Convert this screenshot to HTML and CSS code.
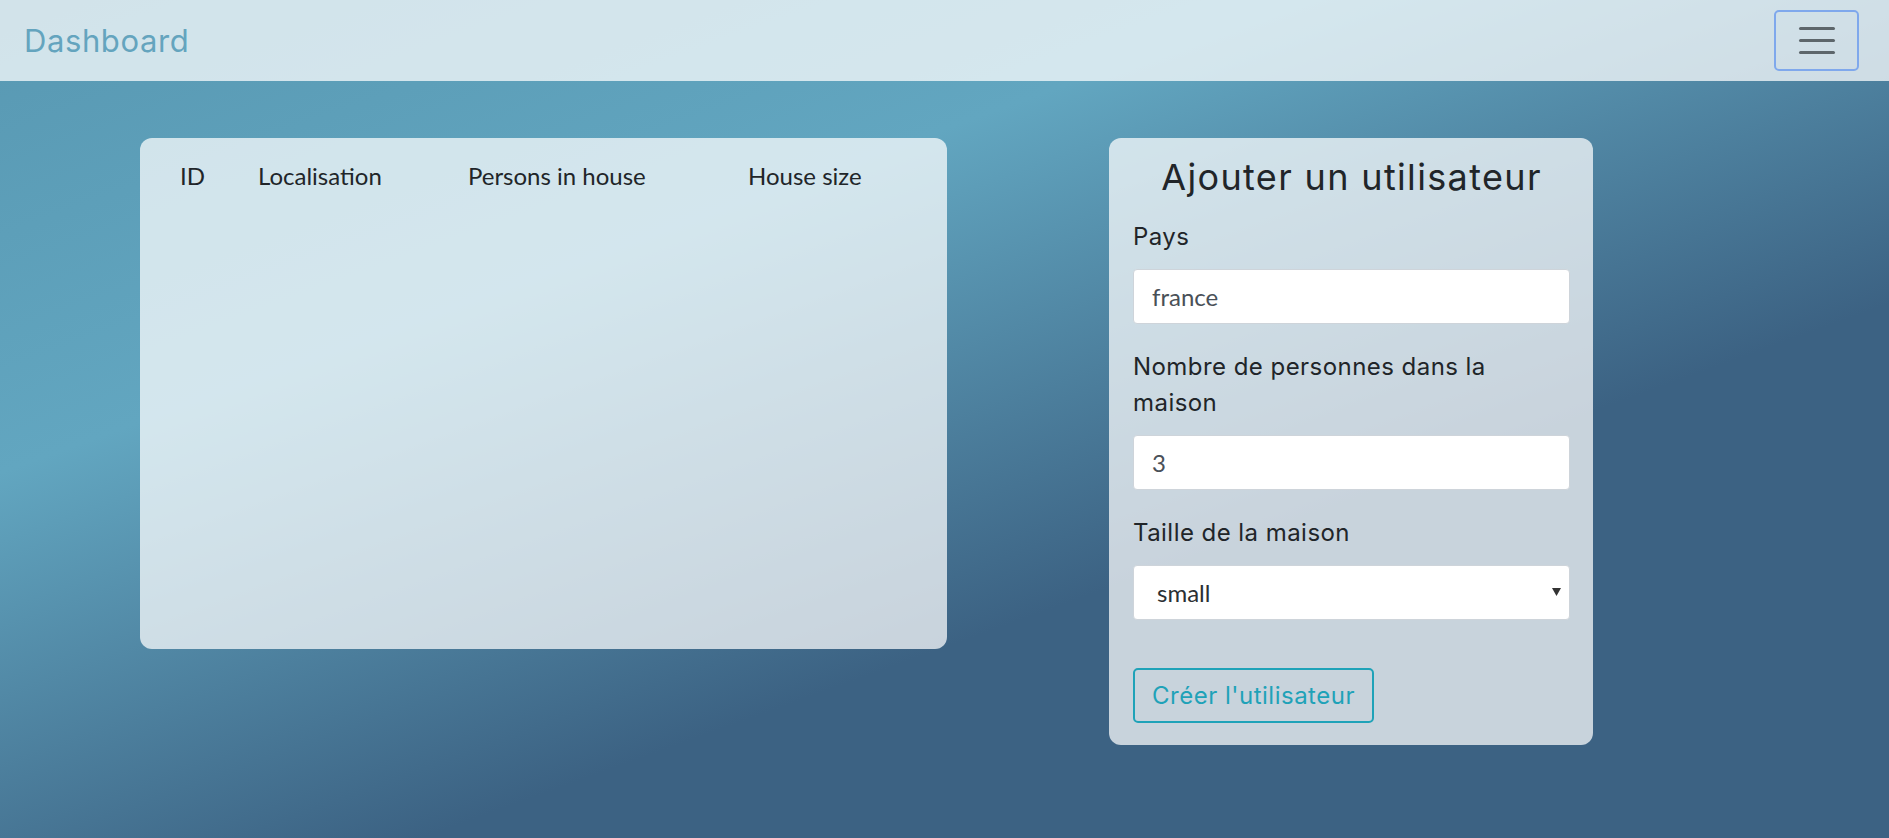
FILE: index.html
```html
<!DOCTYPE html>
<html lang="fr">
<head>
<meta charset="utf-8">
<title>Dashboard</title>
<link rel="stylesheet" href="styles.css">
</head>
<body>
<div class="page">
  <nav class="navbar">
    <a class="brand" href="#">Dashboard</a>
    <button class="toggler" type="button" aria-label="Menu">
      <span class="bar"></span>
      <span class="bar"></span>
      <span class="bar"></span>
    </button>
  </nav>
  <main class="content">
    <section class="card table-card">
      <table class="users-table">
        <colgroup>
          <col class="c-id"><col class="c-loc"><col class="c-persons"><col class="c-size">
        </colgroup>
        <thead>
          <tr><th>ID</th><th>Localisation</th><th>Persons in house</th><th>House size</th></tr>
        </thead>
        <tbody></tbody>
      </table>
    </section>
    <section class="card form-card">
      <h4 class="form-title">Ajouter un utilisateur</h4>
      <form class="user-form">
        <div class="form-group">
          <label class="form-label" for="pays">Pays</label>
          <input class="form-control" id="pays" type="text" value="france">
        </div>
        <div class="form-group">
          <label class="form-label" for="nb">Nombre de personnes dans la maison</label>
          <input class="form-control" id="nb" type="text" value="3">
        </div>
        <div class="form-group">
          <label class="form-label" for="taille">Taille de la maison</label>
          <div class="select-wrap">
            <select class="form-control form-select" id="taille">
              <option>small</option>
              <option>medium</option>
              <option>big</option>
            </select>
            <svg class="select-arrow" width="9" height="8" viewBox="0 0 9 8"><path d="M0 0 H9 L4.5 8 Z" fill="#333"/></svg>
          </div>
        </div>
        <button class="btn-create" type="button">Créer l'utilisateur</button>
      </form>
    </section>
  </main>
</div>
</body>
</html>
```
FILE: styles.css
```css
html, body {
  margin: 0;
  padding: 0;
}

.page {
  min-height: 100vh;
  background: linear-gradient(160deg, #5898b2 0%, #62a6c0 31%, #3c6283 65%, #3c6283 100%);
  font-family: "Inter", "Noto Sans", sans-serif;
  color: #212529;
}

.navbar {
  height: 81px;
  box-sizing: border-box;
  display: flex;
  align-items: center;
  justify-content: space-between;
  padding: 0 30px 0 24px;
  background: rgba(255, 255, 255, 0.73);
}

.brand {
  font-family: "Inter", sans-serif;
  font-size: 31px;
  letter-spacing: 0.6px;
  color: #64a4be;
  text-decoration: none;
}

.toggler {
  width: 85px;
  height: 61px;
  box-sizing: border-box;
  border: 2px solid #7fa8ec;
  border-radius: 5px;
  background: transparent;
  display: flex;
  flex-direction: column;
  align-items: center;
  justify-content: center;
  gap: 9px;
  padding: 0;
}

.bar {
  display: block;
  width: 36px;
  height: 3px;
  border-radius: 2px;
  background: #5d666b;
}

.content {
  display: flex;
  align-items: flex-start;
  gap: 162px;
  padding: 57px 0 0 140px;
}

.card {
  background: rgba(255, 255, 255, 0.72);
  border-radius: 12px;
  box-sizing: border-box;
}

.table-card {
  width: 807px;
  height: 511px;
  padding: 20px 0 0 40px;
}

.users-table {
  border-collapse: collapse;
  table-layout: fixed;
  width: 700px;
  font-family: "Lato", sans-serif;
  font-size: 24px;
  color: #212529;
}

.users-table th {
  padding: 0;
  text-align: left;
  font-weight: 400;
  line-height: 36px;
  white-space: nowrap;
}

.c-id { width: 78px; }
.c-loc { width: 210px; }
.c-persons { width: 280px; }
.c-size { width: 132px; }

.form-card {
  width: 484px;
  padding: 18px 23px 22px 24px;
}

.form-title {
  margin: 0 0 20px;
  font-size: 36px;
  font-weight: 400;
  letter-spacing: 1.35px;
  line-height: 1.2;
  text-align: center;
  color: #212529;
}

.form-group {
  margin-bottom: 25px;
}

.form-label {
  display: block;
  margin-bottom: 14px;
  font-size: 24px;
  letter-spacing: 0.45px;
  line-height: 36px;
  color: #212529;
}

.form-control {
  display: block;
  width: 100%;
  height: 55px;
  box-sizing: border-box;
  padding: 0 18px;
  border: 1px solid #ced4da;
  border-radius: 4px;
  background: #fff;
  font-family: "Lato", sans-serif;
  font-size: 24px;
  color: #495057;
}

.select-wrap {
  position: relative;
}

.form-select {
  appearance: none;
  -webkit-appearance: none;
  padding-left: 23px;
  color: #2b2f33;
}

.select-arrow {
  position: absolute;
  right: 9px;
  top: 23px;
  pointer-events: none;
}

.btn-create {
  margin-top: 23px;
  width: 241px;
  height: 55px;
  box-sizing: border-box;
  border: 2px solid #1fa2b8;
  border-radius: 5px;
  background: transparent;
  padding: 0;
  font-family: "Inter", sans-serif;
  font-size: 24px;
  letter-spacing: 0.5px;
  color: #1fa2b8;
}
```
